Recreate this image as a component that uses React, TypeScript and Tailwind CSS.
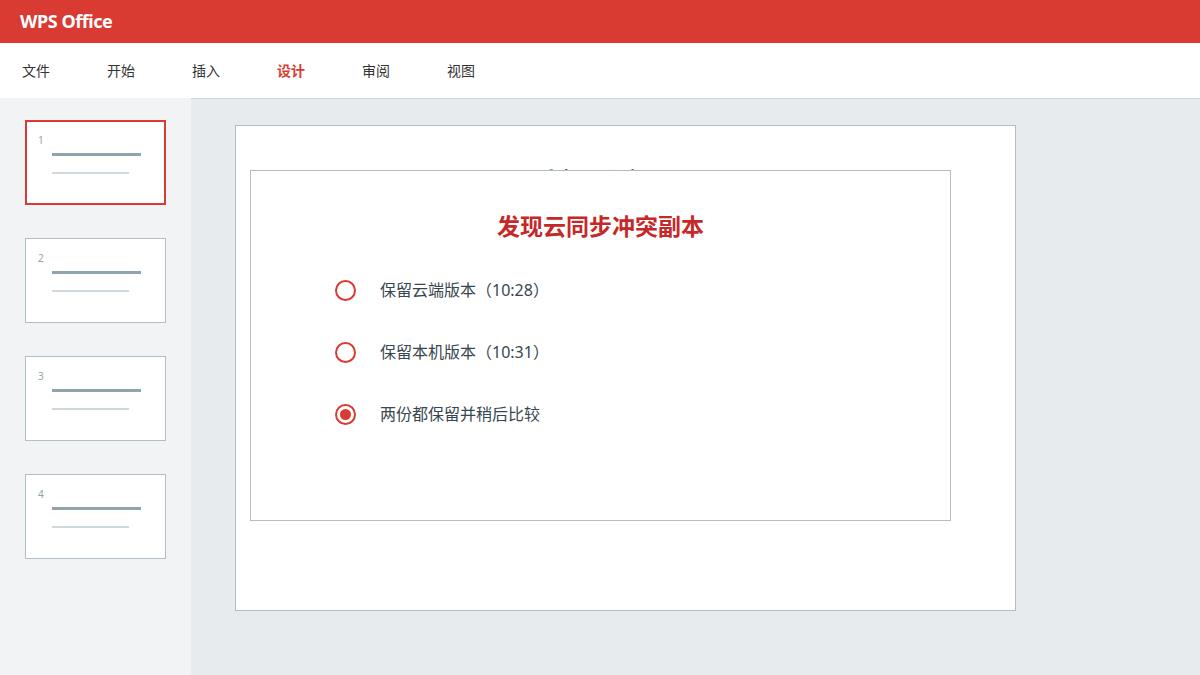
import React from 'react';

const tabs = ['文件', '开始', '插入', '设计', '审阅', '视图'];
const options = [
  { label: '保留云端版本（10:28）', checked: false },
  { label: '保留本机版本（10:31）', checked: false },
  { label: '两份都保留并稍后比较', checked: true },
];

const Thumb: React.FC<{ n: number; active?: boolean }> = ({ n, active }) => (
  <div
    className={`relative w-[141px] h-[85px] bg-white ${
      active ? 'border-2 border-[#d93a31]' : 'border border-[#b0bec5]'
    }`}
  >
    <span className={`absolute ${active ? 'left-[11px] top-[13px]' : 'left-[12px] top-[14px]'} text-[10px] leading-none text-[#90a4ae]`}>
      {n}
    </span>
    <div className={`absolute ${active ? 'left-[25px] top-[31px]' : 'left-[26px] top-[32px]'} w-[89px] h-[3px] bg-[#90a4ae]`} />
    <div className={`absolute ${active ? 'left-[25px] top-[50px]' : 'left-[26px] top-[51px]'} w-[77px] h-[2px] bg-[#cfd8dc]`} />
  </div>
);

export default function App() {
  return (
    <div
      className="w-[1200px] h-[675px] flex flex-col overflow-hidden bg-white"
      style={{ fontFamily: '"Noto Sans", "Noto Sans CJK SC", sans-serif' }}
    >
      {/* 标题栏 */}
      <header className="h-[43px] shrink-0 bg-[#d93a31] flex items-center px-5">
        <span className="text-white text-[18px] font-bold tracking-tight">WPS Office</span>
      </header>

      {/* 菜单 */}
      <nav className="h-[55px] shrink-0 flex items-center pl-[22px]">
        {tabs.map((t) => (
          <span
            key={t}
            className={`w-[85px] text-[14px] ${t === '设计' ? 'text-[#d93a31] font-bold' : 'text-[#333]'}`}
          >
            {t}
          </span>
        ))}
      </nav>

      <div className="flex flex-1 min-h-0">
        {/* 缩略图 */}
        <aside className="w-[191px] shrink-0 bg-[#f2f3f5] flex flex-col gap-[33px] pt-[22px] pl-[25px]">
          <Thumb n={1} active />
          <Thumb n={2} />
          <Thumb n={3} />
          <Thumb n={4} />
        </aside>

        {/* 编辑区 */}
        <main className="flex-1 bg-[#e7ebee] border-t border-[#cfd8dc] pl-[44px] pt-[26px]">
          <div className="relative w-[781px] h-[486px] bg-white border border-[#b0bec5]">
            <div className="pt-[39px] pr-[66px] text-center text-[18px] font-semibold text-[#37474f]">
              季度项目汇报
            </div>

            <div className="absolute left-[14px] top-[44px] w-[701px] h-[351px] bg-white border border-[#b0bec5]">
              <h2 className="mt-[40px] text-center text-[23px] font-bold text-[#c62828] leading-[30px]">
                发现云同步冲突副本
              </h2>
              <div className="mt-[37px] pl-[84px] flex flex-col gap-[38px]">
                {options.map((o) => (
                  <label key={o.label} className="flex items-center h-[24px]">
                    <span className="w-[21px] h-[21px] rounded-full border-2 border-[#d93a31] flex items-center justify-center">
                      {o.checked && <span className="w-[11px] h-[11px] rounded-full bg-[#d93a31]" />}
                    </span>
                    <span className="ml-[24px] text-[16px] text-[#37474f]">{o.label}</span>
                  </label>
                ))}
              </div>
            </div>
          </div>
        </main>
      </div>
    </div>
  );
}
